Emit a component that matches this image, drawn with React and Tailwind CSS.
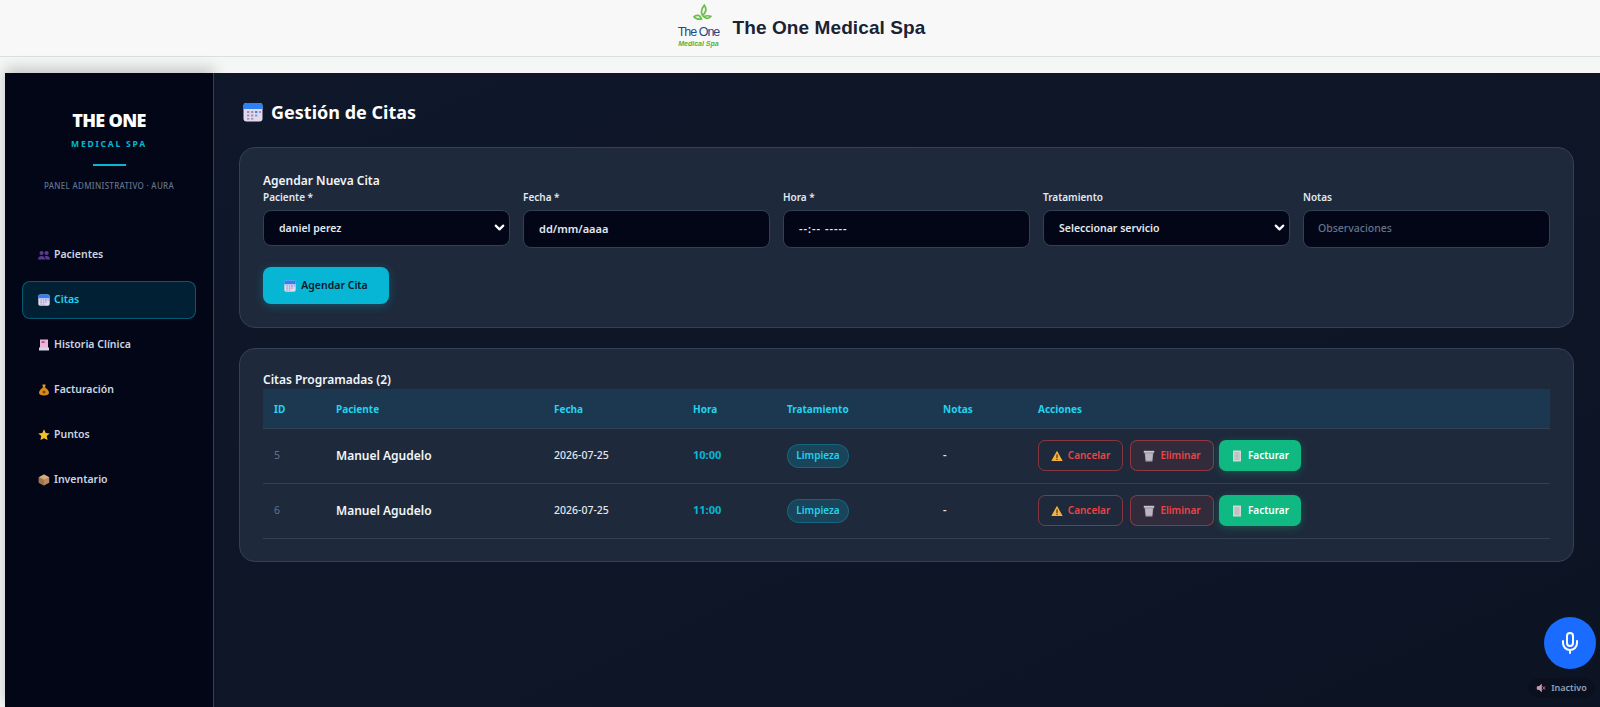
import React from "react";
import { Mic, ChevronDown } from "lucide-react";

const CalendarIcon = ({ className }) => (
  <svg viewBox="0 0 20 20" className={className}>
    <rect x="0.5" y="1" width="19" height="18.5" rx="3" fill="#e3d9ee" />
    <path d="M0.5 7V4a3 3 0 0 1 3-3h13a3 3 0 0 1 3 3v3z" fill="#2f80f5" />
    <g fill="#9c94b8">
      <rect x="4" y="9" width="2.4" height="2" />
      <rect x="8" y="9" width="2.4" height="2" />
      <rect x="12" y="9" width="2.4" height="2" fill="#3b82f6" />
      <rect x="16" y="9" width="2" height="2" />
      <rect x="4" y="12.5" width="2.4" height="2" />
      <rect x="8" y="12.5" width="2.4" height="2" />
      <rect x="12" y="12.5" width="2.4" height="2" />
      <rect x="4" y="16" width="2.4" height="1.6" />
      <rect x="8" y="16" width="2.4" height="1.6" />
    </g>
  </svg>
);

const PeopleIcon = ({ className }) => (
  <svg viewBox="0 0 12 12" className={className} fill="#5b3a94">
    <circle cx="3.6" cy="4" r="2.1" />
    <circle cx="8.6" cy="4" r="2.1" />
    <path d="M0 10.5c0-2.4 1.5-3.6 3.6-3.6s3.4 1.2 3.4 3.6z" />
    <path d="M7.6 10.5c0-1.5-.4-2.6-1.1-3.3.6-.2 1.3-.3 2.1-.3 2 0 3.4 1.2 3.4 3.6z" />
  </svg>
);

const BookIcon = ({ className }) => (
  <svg viewBox="0 0 12 12" className={className}>
    <path d="M2 .5h8v8.500H2z" fill="#e6b7d8" />
    <rect x="3.600" y="2.200" width="3" height="1.800" fill="#c2477f" />
    <path d="M1 8.500h10V11.500H1z" fill="#d9d3e6" />
  </svg>
);

const BagIcon = ({ className }) => (
  <svg viewBox="0 0 12 12" className={className}>
    <path d="M4.400 .5h3.200L7 3.400H5z" fill="#e0a030" />
    <path d="M5 3.200h2C9.500 5 11 7 11 8.800 11 10.800 9 11.500 6 11.500S1 10.800 1 8.800C1 7 2.500 5 5 3.200z" fill="#d98a1f" />
    <circle cx="6" cy="8" r="1.500" fill="#7c4a10" />
  </svg>
);

const StarIcon = ({ className }) => (
  <svg viewBox="0 0 24 24" className={className} fill="#f4bf2a">
    <path d="M12 .5l3.400 7.300 8 1-5.900 5.400 1.600 8L12 18.300l-7.100 3.900 1.600-8L.6 8.800l8-1z" />
  </svg>
);

const BoxIcon = ({ className }) => (
  <svg viewBox="0 0 12 12" className={className}>
    <path d="M6 .6l5.200 2.600v5.600L6 11.400.8 8.800V3.200z" fill="#b98a5e" />
    <path d="M6 5.800l5.200-2.600L6 .6.8 3.200z" fill="#d5ab80" />
    <path d="M6 5.800v5.600L.8 8.800V3.200z" fill="#a0734a" />
  </svg>
);

const WarnIcon = ({ className }) => (
  <svg viewBox="0 0 12 12" className={className}>
    <path d="M6 .8l5.700 10.200H.3z" fill="#f4b13e" />
    <rect x="5.400" y="4.400" width="1.200" height="3.600" fill="#4a3410" />
    <rect x="5.400" y="8.800" width="1.200" height="1.200" fill="#4a3410" />
  </svg>
);

const TrashIcon = ({ className }) => (
  <svg viewBox="0 0 12 12" className={className}>
    <rect x="0.8" y="0.8" width="10.400" height="2" fill="#c9c6d0" />
    <path d="M1.600 2.800h8.800L9.400 11.400H2.600z" fill="#a9a6b2" />
    <path d="M4 4v6M6 4v6M8 4v6" stroke="#d9d6e0" strokeWidth="0.7" />
  </svg>
);

const ReceiptIcon = ({ className }) => (
  <svg viewBox="0 0 12 12" className={className}>
    <rect x="2" y="0.5" width="8" height="11" fill="#d4d6d4" />
    <path d="M3.500 3h5M3.500 5h5M3.500 7h5M3.500 9h5" stroke="#9a9f9c" strokeWidth="0.7" />
  </svg>
);

const MutedIcon = ({ className }) => (
  <svg viewBox="0 0 12 12" className={className}>
    <path d="M1 4h2.500L7 1v10L3.500 8H1z" fill="#c0a0ac" />
    <path d="M8 4l3 4M11 4L8 8" stroke="#c9566e" strokeWidth="1.200" />
  </svg>
);

const navItems = [
  { label: "Pacientes", Icon: PeopleIcon },
  { label: "Citas", Icon: CalendarIcon, active: true },
  { label: "Historia Clínica", Icon: BookIcon },
  { label: "Facturación", Icon: BagIcon },
  { label: "Puntos", Icon: StarIcon },
  { label: "Inventario", Icon: BoxIcon },
];

const citas = [
  { id: 5, hora: "10:00" },
  { id: 6, hora: "11:00" },
];

const fieldClass =
  "w-full bg-[#020617] border border-[#334155] rounded-lg font-semibold text-[#e2e8f0] outline-none";

const Field = ({ label, children }) => (
  <div>
    <label className="block text-[10px] leading-[14px] font-semibold text-[#e2e8f0] mb-[6px]">
      {label}
    </label>
    {children}
  </div>
);

const SelectField = ({ value }) => (
  <div className="relative">
    <select
      className={`${fieldClass} h-[36px] appearance-none px-[15px] pt-[1px] text-[10.500px]`}
      value={value}
      onChange={() => {}}
    >
      <option>{value}</option>
    </select>
    <ChevronDown
      size={15}
      strokeWidth={3.500}
      className="absolute right-[3px] top-[10px] text-white pointer-events-none"
    />
  </div>
);

const Sidebar = () => (
  <aside className="w-[209px] shrink-0 bg-[#020617] border-r border-[#334155] shadow-[0_-4px_14px_rgba(0,0,0,0.22)]">
    <div className="pt-[35px] flex flex-col items-center">
      <div className="text-[18px] leading-[24px] font-black text-white tracking-[-0.7px]">THE ONE</div>
      <div className="mt-[6px] text-[8.500px] leading-[12px] font-bold text-[#06b6d4] tracking-[1.800px]">
        MEDICAL SPA
      </div>
      <div className="mt-[14px] w-[33px] h-[2px] bg-[#06b6d4]" />
      <div className="mt-[14px] text-[8px] leading-[12px] font-medium text-[#64748b] tracking-[0.3px]">
        PANEL ADMINISTRATIVO · AURA
      </div>
    </div>
    <nav className="mt-[44px] px-[17px] flex flex-col gap-[7px]">
      {navItems.map(({ label, Icon, active }) => (
        <div
          key={label}
          className={`h-[38px] flex items-center gap-[4px] pl-[15px] rounded-lg border text-[10.500px] font-semibold ${
            active
              ? "bg-[#06b6d4]/15 border-[#06b6d4]/40 text-[#22d3ee]"
              : "border-transparent text-[#cbd5e1]"
          }`}
        >
          <Icon className="w-[12px] h-[12px]" />
          {label}
        </div>
      ))}
    </nav>
  </aside>
);

const ActionButton = ({ label, Icon, className }) => (
  <button className={`h-[31px] flex items-center justify-center gap-[5px] rounded-[7px] text-[10px] font-semibold ${className}`}>
    <Icon className="w-[12px] h-[12px]" />
    {label}
  </button>
);

export default function App() {
  return (
    <div className="relative h-[707px] overflow-hidden bg-[#f5f6f6] font-['Noto_Sans',sans-serif]">
      <header className="h-[57px] bg-[#f8f8f8] border-b border-[#dcdfe0] flex items-center justify-center gap-[13px] pl-[3px]">
        <div className="w-[42px] h-[46px] flex flex-col items-center whitespace-nowrap">
          <svg viewBox="0 0 20 20" className="w-[23px] h-[23px] -mb-[1px] ml-[7px] -mt-[1px]" fill="none" stroke="#6cc04a" strokeWidth="1.500">
            <path d="M11 10c-2-3-1-6 1.500-9 2 3 2 6-1.500 9z" />
            <path d="M10 13c-3 .5-5 0-6.500-2 3-2 5-1.500 6.500 2z" />
            <path d="M12 11c2-1 4-1 6-.2-1.500 2-4 2.200-6 .2z" />
          </svg>
          <div className="text-[12.500px] leading-[13px] font-medium tracking-[-1px] text-[#1e4a8a] font-['Liberation_Sans',sans-serif]">The One</div>
          <div className="text-[7px] leading-[10px] italic font-bold text-[#4cb53a] font-['Liberation_Sans',sans-serif]">Medical Spa</div>
        </div>
        <h1 className="text-[19px] font-bold tracking-[0.1px] text-[#1a2233] font-['Liberation_Sans',sans-serif]">
          The One Medical Spa
        </h1>
      </header>

      <div className="mt-[16px] pl-[5px] flex h-[634px]">
        <Sidebar />
        <main className="flex-1 bg-gradient-to-br from-[#0f172a] to-[#0c1424] pl-[25px] pr-[26px] pt-[28px]">
          <h2 className="ml-[4px] flex items-center gap-[8px] h-[22px] text-[18px] font-bold text-white">
            <CalendarIcon className="w-[20px] h-[20px]" />
            Gestión de Citas
          </h2>

          <section className="mt-[24px] h-[181px] bg-[#1e293b] border border-[#334155] rounded-2xl px-[23px] pt-[24px]">
            <h3 className="text-[12px] leading-[18px] font-semibold text-[#f1f5f9]">Agendar Nueva Cita</h3>
            <div className="grid grid-cols-5 gap-[13px]">
              <Field label="Paciente *">
                <SelectField value="daniel perez" />
              </Field>
              <Field label="Fecha *">
                <input readOnly value="dd/mm/aaaa" className={`${fieldClass} h-[38px] px-[15px] pb-[2px] text-[11px]`} />
              </Field>
              <Field label="Hora *">
                <input readOnly value="--:-- -----" className={`${fieldClass} h-[38px] px-[15px] pb-[2px] text-[11px] tracking-[1px]`} />
              </Field>
              <Field label="Tratamiento">
                <SelectField value="Seleccionar servicio" />
              </Field>
              <Field label="Notas">
                <input
                  placeholder="Observaciones"
                  className={`${fieldClass} h-[38px] px-[14px] pb-[2px] text-[10.500px] placeholder:text-[#64748b] placeholder:font-medium`}
                />
              </Field>
            </div>
            <button className="mt-[19px] w-[126px] h-[37px] flex items-center justify-center gap-[5px] rounded-lg bg-[#06b6d4] text-[10.500px] font-semibold text-[#0f172a] shadow-[0_2px_10px_rgba(6,182,212,0.3)]">
              <CalendarIcon className="w-[12px] h-[12px]" />
              Agendar Cita
            </button>
          </section>

          <section className="mt-[20px] h-[214px] bg-[#1e293b] border border-[#334155] rounded-2xl px-[23px] pt-[22px]">
            <h3 className="text-[12px] leading-[18px] font-semibold text-[#f1f5f9]">Citas Programadas (2)</h3>
            <table className="w-full table-fixed border-collapse text-left">
              <thead>
                <tr className="h-[39px] bg-[#1c3850] border-b border-[#334155] text-[10px] font-bold text-[#22d3ee]">
                  <th className="w-[61px] pl-[11px] pt-[3px] font-bold">ID</th>
                  <th className="w-[218px] pl-[12px] pt-[3px] font-bold">Paciente</th>
                  <th className="w-[139px] pl-[12px] pt-[3px] font-bold">Fecha</th>
                  <th className="w-[94px] pl-[12px] pt-[3px] font-bold">Hora</th>
                  <th className="w-[156px] pl-[12px] pt-[3px] font-bold">Tratamiento</th>
                  <th className="w-[95px] pl-[12px] pt-[3px] font-bold">Notas</th>
                  <th className="pl-[12px] pt-[3px] font-bold">Acciones</th>
                </tr>
              </thead>
              <tbody>
                {citas.map((c) => (
                  <tr key={c.id} className="h-[55px] border-b border-[#334155]">
                    <td className="pl-[11px] pt-[1px] text-[10.500px] text-[#64748b]">{c.id}</td>
                    <td className="pl-[12px] pt-[1px] text-[12px] font-semibold text-[#f1f5f9]">Manuel Agudelo</td>
                    <td className="pl-[12px] pt-[1px] text-[10.500px] font-medium text-[#e2e8f0]">2026-07-25</td>
                    <td className="pl-[12px] text-[11px] font-bold text-[#06b6d4]">{c.hora}</td>
                    <td className="pl-[12px]">
                      <span className="flex items-center justify-center w-[62px] h-[24px] rounded-full bg-[#06b6d4]/20 border border-[#06b6d4]/30 text-[10px] font-semibold text-[#22d3ee]">
                        Limpieza
                      </span>
                    </td>
                    <td className="pl-[12px] text-[11px] font-semibold text-[#e2e8f0]">-</td>
                    <td className="pl-[12px]">
                      <div className="flex items-center">
                        <ActionButton
                          label="Cancelar"
                          Icon={WarnIcon}
                          className="w-[85px] border border-[#ef4444]/50 text-[#ef4444]"
                        />
                        <ActionButton
                          label="Eliminar"
                          Icon={TrashIcon}
                          className="w-[84px] ml-[7px] border border-[#ef4444]/50 bg-[#ef4444]/10 text-[#ef4444]"
                        />
                        <ActionButton
                          label="Facturar"
                          Icon={ReceiptIcon}
                          className="w-[82px] ml-[5px] bg-[#10b981] text-white shadow-[0_2px_8px_rgba(16,185,129,0.3)]"
                        />
                      </div>
                    </td>
                  </tr>
                ))}
              </tbody>
            </table>
          </section>
        </main>
      </div>

      <button className="absolute left-[1544px] top-[617px] w-[52px] h-[52px] rounded-full bg-[#1a6bff] flex items-center justify-center text-white">
        <Mic size={24} strokeWidth={2} />
      </button>
      <div className="absolute left-[1528px] top-[678px] w-[67px] h-[20px] rounded-full bg-[#0a101e] flex items-center justify-center gap-[5px] text-[9px] font-semibold text-[#94a3b8]">
        <MutedIcon className="w-[10px] h-[10px]" />
        Inactivo
      </div>
    </div>
  );
}
